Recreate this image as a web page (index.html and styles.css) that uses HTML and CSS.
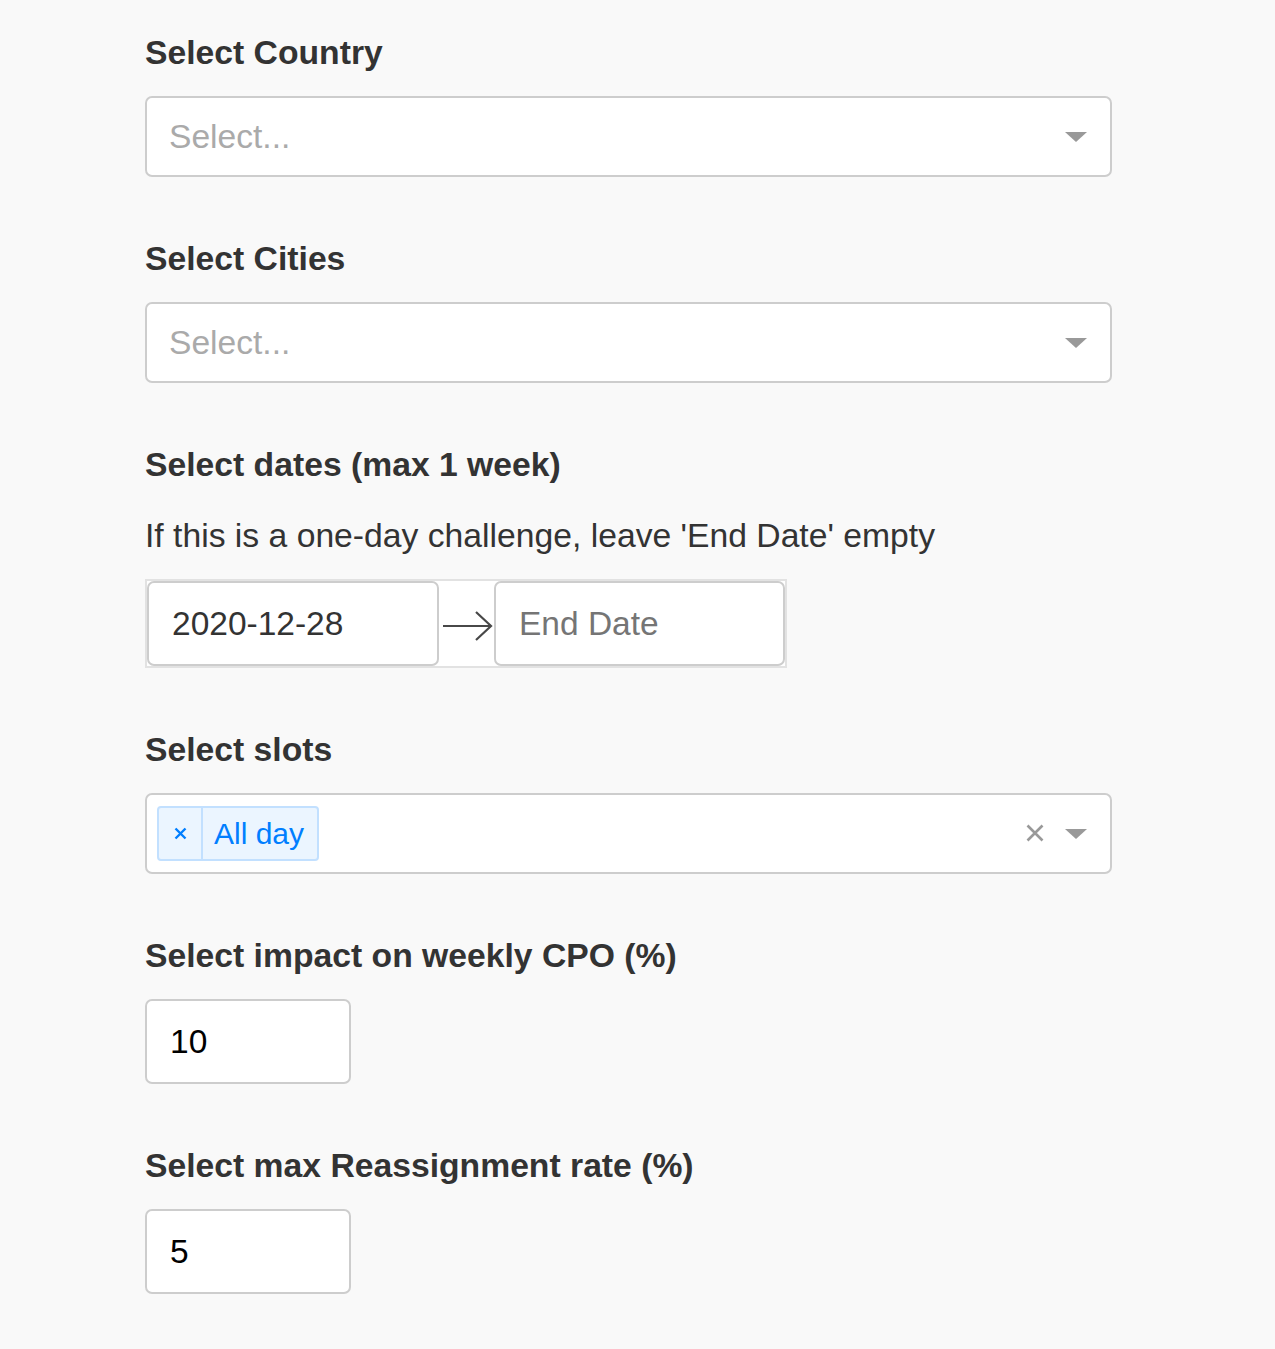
FILE: index.html
```html
<!DOCTYPE html>
<html>
<head>
<meta charset="utf-8">
<link rel="stylesheet" href="styles.css">
</head>
<body>
<div class="page">
  <section class="field">
    <div class="label">Select Country</div>
    <div class="select">
      <span class="placeholder">Select...</span>
      <span class="spacer"></span>
      <span class="caret"></span>
    </div>
  </section>

  <section class="field">
    <div class="label">Select Cities</div>
    <div class="select">
      <span class="placeholder">Select...</span>
      <span class="spacer"></span>
      <span class="caret"></span>
    </div>
  </section>

  <section class="field">
    <div class="label">Select dates (max 1 week)</div>
    <p class="desc">If this is a one-day challenge, leave 'End Date' empty</p>
    <div class="daterange">
      <div class="dateinput">2020-12-28</div>
      <div class="arrow">
        <svg width="52" height="32" viewBox="0 0 52 32"><path d="M2 16H50M35 2L50 16L35 30" fill="none" stroke="#484848" stroke-width="2.2"/></svg>
      </div>
      <div class="dateinput empty">End Date</div>
    </div>
  </section>

  <section class="field">
    <div class="label">Select slots</div>
    <div class="select multi">
      <div class="tag">
        <span class="tag-remove"><svg width="13" height="13" viewBox="0 0 13 13"><path d="M1.5 1.5L11.5 11.5M11.5 1.5L1.5 11.5" stroke="#007eff" stroke-width="2.4"/></svg></span>
        <span class="tag-label">All day</span>
      </div>
      <span class="spacer"></span>
      <span class="clear"><svg width="18" height="18" viewBox="0 0 18 18"><path d="M1.5 1.5L16.5 16.5M16.5 1.5L1.5 16.5" stroke="#999" stroke-width="2.6"/></svg></span>
      <span class="caret"></span>
    </div>
  </section>

  <section class="field">
    <div class="label">Select impact on weekly CPO (%)</div>
    <div class="numinput">10</div>
  </section>

  <section class="field">
    <div class="label">Select max Reassignment rate (%)</div>
    <div class="numinput">5</div>
  </section>
</div>
</body>
</html>
```

FILE: styles.css
```css
html, body {
  margin: 0;
  padding: 0;
  background: #f9f9f9;
}
body {
  font-family: "Liberation Sans", Arial, sans-serif;
  color: #333;
}
.page {
  padding: 33px 0 40px 145px;
  width: 967px;
}
.field {
  margin-bottom: 62px;
}
.label {
  font-size: 33.7px;
  font-weight: bold;
  line-height: 38px;
  margin-bottom: 25px;
  color: #333;
}
.desc {
  margin: 33px 0 25px 0;
  font-size: 33.7px;
  line-height: 38px;
  color: #333;
}
.select {
  box-sizing: border-box;
  height: 81px;
  border: 2px solid #cdcdcd;
  border-radius: 7px;
  background: #fff;
  display: flex;
  align-items: center;
  padding: 0 23px 0 22px;
}
.placeholder {
  font-size: 33.6px;
  color: #aaa;
}
.spacer {
  flex: 1;
}
.caret {
  width: 0;
  height: 0;
  border-top: 10px solid #999;
  border-left: 11px solid transparent;
  border-right: 11px solid transparent;
  margin-top: 1px;
}
.select.multi {
  padding-left: 10px;
}
.tag {
  box-sizing: border-box;
  height: 55px;
  display: flex;
  align-items: stretch;
  background: #ebf5ff;
  border: 2px solid #c2e0ff;
  border-radius: 4px;
  color: #007eff;
}
.tag-remove {
  width: 42px;
  display: flex;
  align-items: center;
  justify-content: center;
  border-right: 2px solid #c2e0ff;
}
.tag-label {
  display: flex;
  align-items: center;
  font-size: 30px;
  padding: 0 13px 0 11px;
}
.clear {
  display: flex;
  align-items: center;
  margin-right: 21px;
  margin-top: -2px;
}
.daterange {
  display: inline-flex;
  align-items: stretch;
  border: 2px solid #e2e2e2;
  background: #fff;
}
.dateinput {
  box-sizing: border-box;
  width: 292px;
  height: 85px;
  border: 2px solid #cdcdcd;
  border-radius: 7px;
  background: #fff;
  font-size: 33.5px;
  display: flex;
  align-items: center;
  padding-left: 23px;
  color: #333;
}
.dateinput.empty {
  width: 291px;
  color: #757575;
}
.arrow {
  width: 55px;
  display: flex;
  align-items: center;
  justify-content: center;
  padding-top: 4px;
  box-sizing: border-box;
}
.numinput {
  box-sizing: border-box;
  width: 206px;
  height: 85px;
  border: 2px solid #cdcdcd;
  border-radius: 7px;
  background: #fff;
  font-size: 33.5px;
  color: #000;
  display: flex;
  align-items: center;
  padding-left: 23px;
}
```
